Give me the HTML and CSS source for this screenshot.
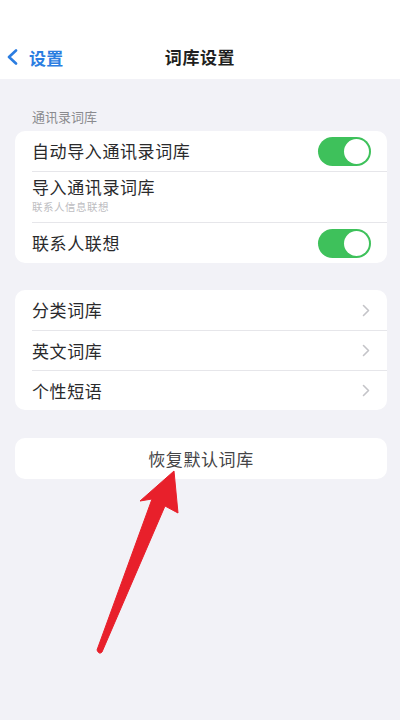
FILE: index.html
```html
<!DOCTYPE html>
<html lang="zh-CN">
<head>
<meta charset="utf-8">
<link rel="stylesheet" href="styles.css">
</head>
<body>
<div class="page">
  <header class="nav">
    <div class="back">
      <svg class="back-icon" width="13" height="16" viewBox="0 0 13 16"><path d="M10 1.5 L3 8 L10 14.5" fill="none" stroke="#2b7de1" stroke-width="2.6" stroke-linecap="round" stroke-linejoin="round"/></svg>
      <span class="back-text">设置</span>
    </div>
    <div class="title">词库设置</div>
    <div></div>
  </header>
  <main class="content">
    <div class="section-label">通讯录词库</div>
    <div class="card">
      <div class="row">
        <span class="row-text">自动导入通讯录词库</span>
        <span class="toggle"><span class="knob"></span></span>
      </div>
      <div class="row row-tall">
        <div class="row-stack">
          <span class="row-text">导入通讯录词库</span>
          <span class="row-sub">联系人信息联想</span>
        </div>
      </div>
      <div class="row">
        <span class="row-text">联系人联想</span>
        <span class="toggle"><span class="knob"></span></span>
      </div>
    </div>
    <div class="card card-gap">
      <div class="row row-link">
        <span class="row-text">分类词库</span>
        <svg class="chev" width="8" height="13" viewBox="0 0 8 13"><path d="M1.5 1.5 L6.5 6.5 L1.5 11.5" fill="none" stroke="#c4c4c8" stroke-width="1.6" stroke-linecap="round" stroke-linejoin="round"/></svg>
      </div>
      <div class="row row-link">
        <span class="row-text">英文词库</span>
        <svg class="chev" width="8" height="13" viewBox="0 0 8 13"><path d="M1.5 1.5 L6.5 6.5 L1.5 11.5" fill="none" stroke="#c4c4c8" stroke-width="1.6" stroke-linecap="round" stroke-linejoin="round"/></svg>
      </div>
      <div class="row row-link">
        <span class="row-text">个性短语</span>
        <svg class="chev" width="8" height="13" viewBox="0 0 8 13"><path d="M1.5 1.5 L6.5 6.5 L1.5 11.5" fill="none" stroke="#c4c4c8" stroke-width="1.6" stroke-linecap="round" stroke-linejoin="round"/></svg>
      </div>
    </div>
    <div class="card card-gap button-card">恢复默认词库</div>
  </main>
  <svg class="arrow" width="400" height="720" viewBox="0 0 400 720">
    <path d="M174 471 L140 501 L152 499 L97 650 Q99 655 102 652 L165 506 L178 513 Z" fill="#e8202b" stroke="#e8202b" stroke-width="1" stroke-linejoin="round"/>
  </svg>
</div>
</body>
</html>
```

FILE: styles.css
```css
html, body {
  margin: 0;
  padding: 0;
}
body {
  background: #f2f2f7;
  font-family: "Noto Sans CJK SC", "Noto Sans", sans-serif;
  color: #2a2a2c;
}
.page {
  position: relative;
  width: 400px;
  height: 720px;
  overflow: hidden;
  background: #f2f2f7;
}
.nav {
  height: 79px;
  background: #ffffff;
  display: grid;
  grid-template-columns: 1fr auto 1fr;
  align-items: end;
  padding-bottom: 8px;
  box-sizing: border-box;
}
.back {
  display: flex;
  align-items: center;
  padding-left: 6px;
  height: 28px;
}
.back-icon {
  display: block;
}
.back-text {
  margin-left: 10px;
  color: #2b7de1;
  font-size: 17px;
  font-weight: 700;
  letter-spacing: 0.3px;
}
.title {
  font-size: 17px;
  font-weight: 700;
  height: 28px;
  line-height: 28px;
  letter-spacing: 0.6px;
  color: #1f1f21;
}
.content {
  padding: 0 13px 0 15px;
}
.section-label {
  margin-top: 30px;
  padding-left: 17px;
  font-size: 13px;
  line-height: 16px;
  height: 16px;
  color: #8a8a8e;
  margin-bottom: 6px;
}
.card {
  background: #ffffff;
  border-radius: 10px;
  overflow: hidden;
}
.card-gap {
  margin-top: 27px;
}
.row {
  margin-left: 17px;
  padding-right: 16px;
  height: 40px;
  display: flex;
  align-items: center;
  justify-content: space-between;
  box-sizing: border-box;
}
.row + .row {
  border-top: 1px solid #e6e6ea;
  height: 41px;
}
.row-link + .row-link {
  height: 40px;
}
.row-link {
  padding-right: 17px;
}
.row.row-tall {
  height: 51px;
  align-items: flex-start;
  padding-top: 5px;
}
.row-stack {
  display: flex;
  flex-direction: column;
}
.row-text {
  font-size: 17px;
  line-height: 20px;
  letter-spacing: 0.6px;
  color: #2a2a2c;
}
.row-sub {
  margin-top: 3px;
  font-size: 10.5px;
  line-height: 14px;
  color: #bdbdc1;
  letter-spacing: 0.5px;
}
.toggle {
  width: 53px;
  height: 29px;
  border-radius: 15px;
  background: #3ec15b;
  display: flex;
  align-items: center;
  justify-content: flex-end;
  padding: 2px;
  box-sizing: border-box;
}
.knob {
  width: 25px;
  height: 25px;
  border-radius: 50%;
  background: #ffffff;
}
.chev {
  display: block;
}
.button-card {
  margin-top: 28px;
  height: 41px;
  display: flex;
  align-items: center;
  justify-content: center;
  font-size: 17px;
  letter-spacing: 0.6px;
  color: #444446;
}
.arrow {
  position: absolute;
  left: 0;
  top: 0;
  pointer-events: none;
}
```
